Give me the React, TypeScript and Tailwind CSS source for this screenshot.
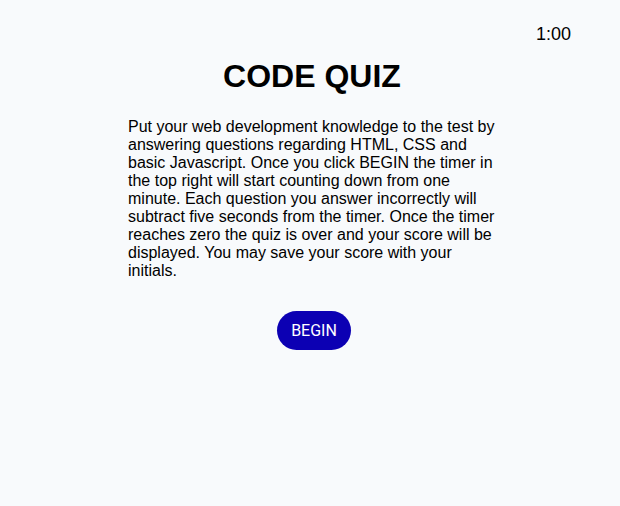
export default function App() {
  return (
    <div className="min-h-screen bg-[#f8fafc] text-black font-['Liberation_Sans',Arial,sans-serif]">
      <header className="flex justify-end pt-6 pr-[49px]">
        <span className="text-[18px] leading-[21px]">1:00</span>
      </header>
      <main className="flex flex-col">
        <h1 className="mt-[13px] text-center text-[32px] leading-[37px] font-bold pl-[4px]">CODE QUIZ</h1>
        <p className="mt-[23px] ml-[128px] w-[374px] text-[16px] leading-[18px]">
          Put your web development knowledge to the test by answering questions regarding HTML, CSS and basic
          Javascript. Once you click BEGIN the timer in the top right will start counting down from one minute. Each
          question you answer incorrectly will subtract five seconds from the timer. Once the timer reaches zero the
          quiz is over and your score will be displayed. You may save your score with your initials.
        </p>
        <div className="mt-[31px] flex justify-center pl-[8px]">
          <button className="h-[39px] w-[74px] rounded-full bg-[#0c00b3] text-white text-[16px] font-['Roboto',sans-serif]">
            BEGIN
          </button>
        </div>
      </main>
    </div>
  )
}
